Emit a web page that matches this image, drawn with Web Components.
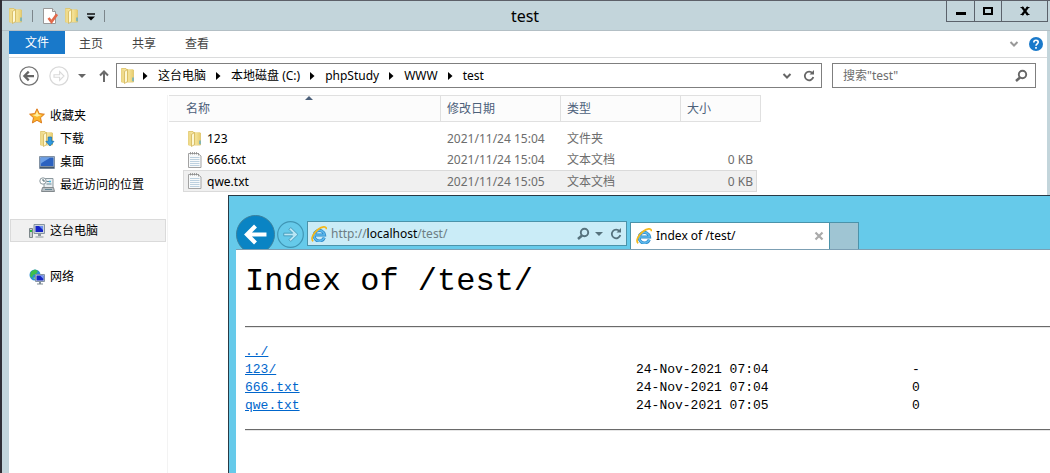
<!DOCTYPE html>
<html lang="zh-CN">
<head>
<meta charset="utf-8">
<title>test</title>
<style>
html,body{height:100%}
body{margin:0;overflow:hidden;position:relative;background:#fff;font:12px/20px "Noto Sans","Noto Sans CJK SC",sans-serif;color:#000}
</style>
</head>
<body>
<explorer-window>
  <title-bar slot="title">test</title-bar>
  <ribbon-tabs slot="ribbon"></ribbon-tabs>
  <nav-bar slot="nav"></nav-bar>
  <side-nav slot="side">
    <nav-item icon="star">收藏夹</nav-item>
    <nav-item icon="download" child>下载</nav-item>
    <nav-item icon="desktop" child>桌面</nav-item>
    <nav-item icon="recent" child>最近访问的位置</nav-item>
    <nav-item icon="computer" group selected>这台电脑</nav-item>
    <nav-item icon="network" group>网络</nav-item>
  </side-nav>
  <file-list></file-list>
</explorer-window>
<browser-window>
  <dir-listing></dir-listing>
</browser-window>

<script>
const folder = '<defs><linearGradient id="f" x2="1"><stop stop-color="#e3c760"/><stop offset=".35" stop-color="#f4e39a"/><stop offset="1" stop-color="#e9cf72"/></linearGradient></defs><path d="M1.500.5h4.500l1 1.500h6.500v12h-12z" fill="#f3e3a0" stroke="#dcc062" stroke-width=".8"/><path d="M6.500 1.500h6.500v12.500h-6.500z" fill="url(#f)"/><path d="M1.500 1l3 .8v13.500l-3-1.300z" fill="#efdb8c"/><path d="M4.500 3.500l3-2V13.500l-3 2z" fill="#fdf8d4" stroke="#cfae4a" stroke-width=".7"/><path d="M13 9.500v3.800" stroke="#45a6d8" stroke-width="1.200"/>';
const ie = '<path d="M13.300 11.600A5.300 5.300 0 1 1 13.600 9H4" fill="none" stroke="#2585c7" stroke-width="3"/><path d="M13.300 11.600A5.300 5.300 0 1 1 13.600 9H4" fill="none" stroke="#5cb8ec" stroke-width="1.700"/><path d="M2.200 15.200C-.8 13 2.500 7 7 3.500 11 .5 15.500-.2 15.400 3.200" fill="none" stroke="#f3b81c" stroke-width="1.700"/>';
const icons = {
  folder,
  star:'<path d="M8 .8l2.200 4.800 5.200.6-3.900 3.500 1.100 5.200L8 12.300l-4.600 2.600 1.100-5.200L.6 6.200l5.200-.6z" fill="#fbb62c" stroke="#dc7a1c"/><path d="M8 3l1.500 3.600 3 .4-4.500 1.800-4.500-1.800 3-.4z" fill="#fff0a2"/>',
  download: folder + '<path d="M9.200 6h3.400v4.300H15L11 15 6.800 10.300h2.400z" fill="#2f9ae0" stroke="#1a6dad" stroke-width=".7"/>',
  desktop:'<path d="M.5 2.500h15v12H.5z" fill="#b9c6d2" stroke="#8292a4"/><path d="M1.500 3.500h13v8.500h-13z" fill="#2b62c0"/><path d="M1.500 3.500h10L2.500 9l-1 2z" fill="#6c9fe5"/><path d="M1 12.500h14v1.700H1z" fill="#44586c"/>',
  recent:'<path d="M5 1.500h9v9H5z" fill="#e9eef1" stroke="#8d999e"/><path d="M3.500 10.500h11l1 4h-13z" fill="#b8bfc3" stroke="#82898d"/><path d="M7.500 4.500h4M7.500 7h5M6 12.500h7" stroke="#648796"/><path d="M10 4.500h2" stroke="#40b6df" stroke-width="1.500"/><circle cx="4" cy="4" r="3.200" fill="#fff" stroke="#8a979d"/><path d="M4 2v2h2" fill="none" stroke="#4d676f"/>',
  computer:'<path d="M.5 5.500h3v9h-3z" fill="#c8ced0" stroke="#7d878a"/><path d="M1 8h2" stroke="#26b83c" stroke-width="2"/><path d="M5 1.500h10.500v9H5z" fill="#cdd5dc" stroke="#8694a0"/><path d="M6.500 3H14v6H6.500z" fill="#1524c7"/><path d="M10 3h4v4z" fill="#6a8ef0"/><path d="M9 11h3v2H9zM6.500 13.500h8v1h-8z" fill="#8a969d"/>',
  network:'<circle cx="6" cy="6" r="5.500" fill="#2b8cd8"/><path d="M2 2.500l4-2 3 1.500-2 3-3 1-1 3-2-2z" fill="#3fbf4a"/><path d="M4 9l3-1v3z" fill="#7edc78"/><path d="M6.500 5.500h9v7h-9z" fill="#cbd5e0" stroke="#8695a5"/><path d="M7.500 6.500h7v5h-7z" fill="#1626c4"/><path d="M11 6.500h3.500V10z" fill="#7c9cf3"/><path d="M10 13h2v1.500h2v1H8v-1h2z" fill="#7f8c96"/>',
  text:'<path d="M1.500 1.500h9.500l3 2.500v11.500h-12.500z" fill="#f8fafb" stroke="#a3a3a3"/><path d="M3.500 0v2.500M5.500 0v2.500M7.500 0v2.500M9.500 0v2.500M11.500 1v2.500" stroke="#8b8b8b" stroke-width=".8"/><path d="M3 5.500h9.500M3 7.500h9.500M3 9.500h9.500M3 11.500h9.500M3 13.500h9.500" stroke="#bcd0df"/>',
  check:'<path d="M1.500.5h9l3 3v12h-12z" fill="#fff" stroke="#999"/><path d="M10.500.5v3h3" fill="#ddd" stroke="#999"/><path d="M6.500 10l3 3.800 5.500-7.500" fill="none" stroke="#e2694a" stroke-width="2.600"/>',
  quick:'<path d="M4 6h8" stroke="#000" stroke-width="1.400"/><path d="M4 8.500h8l-4 4z" fill="#000"/>',
  back:'<circle cx="8" cy="8" r="7.300" fill="none" stroke="#757575"/><path d="M12 8H4.500M7.800 4.500L4.300 8l3.500 3.500" fill="none" stroke="#666" stroke-width="1.800"/>',
  forward:'<circle cx="8" cy="8" r="7.300" fill="none" stroke="#d9d9d9"/><path d="M4 7h4.500V4.500L12 8l-3.500 3.500V9H4z" fill="none" stroke="#dadada" stroke-width=".9"/>',
  up:'<path d="M8 14V3.500M4 7.500l4-4 4 4" fill="none" stroke="#6b6b6b" stroke-width="2"/>',
  caret:'<path d="M4 6h8l-4 4z" fill="currentColor"/>',
  right:'<path d="M6 4l4.500 4L6 12z" fill="#000"/>',
  chevron:'<path d="M4.500 6L8 9.500 11.500 6" fill="none" stroke="currentColor" stroke-width="2"/>',
  refresh:'<path d="M11.500 5.300A4.300 4.300 0 1 0 12.300 9" fill="none" stroke="currentColor" stroke-width="1.800"/><path d="M8.500 6.500h4.500V2z" fill="currentColor"/>',
  search:'<circle cx="9.500" cy="6.500" r="3.700" fill="none" stroke="currentColor" stroke-width="1.900"/><path d="M7 9.500L3 13" stroke="currentColor" stroke-width="2.500"/>',
  help:'<circle cx="8" cy="8" r="8" fill="#1979ca"/><path d="M5.500 6.200C5.500 2.800 10.700 3 10.500 6 10.400 7.800 8 7.800 8 10M8 11.300v2" fill="none" stroke="#fff" stroke-width="1.900"/>',
  min:'<path d="M3 9h10v3H3z" fill="#000"/>',
  max:'<path d="M4 5h8v6H4z" fill="none" stroke="#000" stroke-width="2"/>',
  close:'<path d="M5 4l6 8M11 4l-6 8" stroke="#000" stroke-width="2.200"/><path d="M3.500 4.500h3M9.500 4.500h3M3.500 11.500h3M9.500 11.500h3" stroke="#000" stroke-width="1"/>',
  x:'<path d="M4.500 4.500l7 7M11.500 4.500l-7 7" stroke="#aaa" stroke-width="2.200"/>',
  bigback:'<circle cx="8" cy="8" r="7.800" fill="#0a84c4" stroke="#3c7f9b" stroke-width=".4"/><path d="M12.500 8H4.500M8 4.500L4.500 8 8 11.500" fill="none" stroke="#fff" stroke-width="1.700"/>',
  bigforward:'<circle cx="8" cy="8" r="7.600" fill="none" stroke="#4096b5" stroke-width=".7"/><path d="M4 7.200h5.300L7 4.900l1.200-1L12.400 8l-4.200 4.100L7 11.100l2.300-2.300H4z" fill="#b9e6f5" stroke="#4096b5" stroke-width=".5"/>',
  ie
};
const base = '*{box-sizing:border-box}button{font:inherit;color:inherit;border:0;padding:0;background:none;display:flex;align-items:center;justify-content:center}';
const define = (tag, css, html) => customElements.define(tag, class extends HTMLElement {
  constructor() {
    super();
    this.attachShadow({mode: 'open'}).innerHTML = `<style>${base}${css}</style>${typeof html === 'function' ? html(this) : html}`;
  }
});
const ic = (name, size = 16) => `<ui-icon name="${name}" style="--size:${size}px"></ui-icon>`;

define('ui-icon', ':host{display:block;flex:none;width:var(--size,16px);height:var(--size,16px)}svg{display:block;width:100%;height:100%}',
  el => `<svg viewBox="0 0 16 16" aria-hidden="true">${icons[el.getAttribute('name')]}</svg>`);

define('explorer-window', `
:host{display:flex;flex-direction:column;min-height:100%;background:#fff;border:solid #c3d5db;border-width:0 3px 0 7px;box-sizing:border-box;margin-left:2px;box-shadow:-2px 0 #302e35}
.body{flex:1;display:flex}`,
`<slot name="title"></slot><slot name="ribbon"></slot><slot name="nav"></slot><div class="body"><slot name="side"></slot><slot></slot></div>`);

define('title-bar', `
:host{display:grid;grid-template-columns:1fr auto 1fr;height:31px;margin:0 -3px 0 -7px;padding-right:2px;background:#c3d5db;border-top:1px solid #5d6069;border-bottom:1px solid #b3bfc5;box-sizing:border-box}
h1{margin:0;font-size:16px;font-weight:400;line-height:30px}
.quick{display:flex;align-items:center;padding-left:6px}
.sep{width:1px;height:12px;background:#7c868b;margin:0 9px 0 8px}
.sep.end{margin:0 0 0 5px}
.gap{margin-right:6px}
.more{margin-left:3px}
.win{display:flex;justify-self:end;height:21px;border:solid #5b626b;border-width:0 1px 1px}
.win button{width:27px}.win button+button{border-left:1px solid #5b626b}.win button:last-child{width:46px}`,
`<div class="quick">${ic('folder')}<i class="sep"></i><button class="gap" aria-label="属性">${ic('check')}</button><button aria-label="新建文件夹">${ic('folder')}</button><button class="more" aria-label="自定义快速访问工具栏">${ic('quick')}</button><i class="sep end"></i></div>
<h1><slot></slot></h1>
<div class="win"><button aria-label="最小化">${ic('min')}</button><button aria-label="最大化">${ic('max')}</button><button aria-label="关闭">${ic('close')}</button></div>`);

define('ribbon-tabs', `
:host{display:flex;height:27px;border-bottom:1px solid #dadbdc;box-sizing:border-box;padding-right:4px;color:#444}
button{padding:0 14px;height:26px;margin-right:1px}
.file{background:#1979ca;color:#fff;padding:0 16px;height:23px;margin:0}
.end{margin-left:auto;display:flex;align-items:center;gap:7px;color:#999}
.end button{padding:0;margin:0}`,
`<button class="file">文件</button><button>主页</button><button>共享</button><button>查看</button><div class="end"><button aria-label="展开功能区">${ic('chevron')}</button><button aria-label="帮助">${ic('help',14)}</button></div>`);

define('nav-bar', `
:host{display:flex;align-items:center;height:37px;padding:0 11px 2px 10px;box-sizing:border-box;color:#666}
.fwd{margin:0 5px 0 10px}.up{margin:0 4px 0 6px}
.path{flex:1;height:25px;border:1px solid #7f7f7f;display:flex;align-items:center;padding:0 4px 0 3px;color:#000}
.path button:not(.tool){margin:0 4px 0 5px}
.tool{margin-left:6px;color:#666}
.find{width:204px;height:25px;margin-left:10px;border:1px solid #7f7f7f;display:flex;align-items:center;padding:0 6px 0 10px}
input{flex:1;min-width:0;border:0;outline:0;padding:0;background:none;font:inherit}
input::placeholder{color:#6d6d6d;opacity:1}`,
`<button aria-label="后退">${ic('back',20)}</button><button class="fwd" aria-label="前进">${ic('forward',20)}</button><button aria-label="最近浏览的位置">${ic('caret')}</button><button class="up" aria-label="上移">${ic('up')}</button>
<div class="path">${ic('folder')}<span style="width:1px"></span>${['这台电脑','本地磁盘 (C:)','phpStudy','WWW','test'].map(t => `<span class="arrow">${ic('right')}</span><button>${t}</button>`).join('')}
<button class="tool" style="margin-left:auto" aria-label="以前的位置">${ic('chevron')}</button><button class="tool" aria-label="刷新">${ic('refresh')}</button></div>
<div class="find"><input type="search" aria-label="搜索" placeholder='搜索"test"'>${ic('search')}</div>`);

define('side-nav', ':host{display:block;flex:none;width:159px;padding:9px 1px 0 1px;border-right:1px solid #f3f3f3;box-sizing:border-box}', '<nav><slot></slot></nav>');
define('nav-item', `
:host{display:block}
:host([group]){margin-top:23px}
a{display:flex;align-items:center;height:23px;border:1px solid transparent;padding-left:18px;gap:5px;color:inherit;text-decoration:none}
:host([child]) a{padding-left:28px;gap:5px}
:host([selected]) a{background:#f0f0f0;border-color:#dadada}`,
el => `<a href="#">${ic(el.getAttribute('icon'))}<slot></slot></a>`);

const files = [['folder','123','2021/11/24 15:04','文件夹',''],['text','666.txt','2021/11/24 15:04','文本文档','0 KB'],['text','qwe.txt','2021/11/24 15:05','文本文档','0 KB']];
define('file-list', `
:host{display:block;margin-left:1px}
table,thead,tbody{display:block}
tr{display:grid;grid-template-columns:1fr 120px 120px 80px}
table{width:592px}
thead tr{height:27px;background:#fcfcfc;border:solid #e0e0e0;border-width:1px 0;color:#4c607a}
th{position:relative;font-weight:400;text-align:left;line-height:25px;padding:0 6px;border-right:1px solid #e0e0e0}
th:first-child{padding-left:17px}
th i{position:absolute;top:0;left:50%;border:solid transparent;border-width:0 4px 4px;border-bottom-color:#4c607a}
tbody{padding:6px 4px 0 14px}
tbody tr{height:21px;grid-template-columns:1fr 120px 120px 75px;border:1px solid transparent;align-items:center}
tbody tr:last-child{height:22px;background:#f0f0f0;border-color:#dadada}
td{padding:0 6px;color:#6d6d6d;line-height:19px}
td:first-child{display:flex;align-items:center;gap:4px;padding-left:3px;color:#000}
td:last-child{text-align:right;padding-right:3px}`,
`<table><thead><tr><th>名称<i></i></th><th>修改日期</th><th>类型</th><th>大小</th></tr></thead><tbody>${files.map(([i, ...c]) => `<tr>${c.map((t, n) => `<td>${n ? '' : ic(i)}${t}</td>`).join('')}</tr>`).join('')}</tbody></table>`);

define('browser-window', `
:host{position:absolute;left:228px;top:195px;right:0;bottom:0;display:flex;flex-direction:column;background:#66caea;border:solid #283a45;border-width:1px 0 0 1px;padding-left:7px;box-sizing:border-box;overflow:hidden}
.bar{flex:none;display:flex;align-items:flex-end;height:54px;overflow:hidden;border-bottom:1px solid #7c9fb3}
.back{height:34px;align-items:flex-start;margin-right:2px;overflow:hidden}
.fwd{margin:0 3px 1px 0}
.addr{flex:0 1 320px;height:25px;margin:0 3px 3px 0;border:1px solid #4b93aa;background:#caecf7;display:flex;align-items:center;gap:4px;padding:0 2px 0 3px;color:#56727d}
.url{flex:1;color:#6d7d83;outline:0;white-space:nowrap}
.more{margin:0 -3px 0 -4px}
b{font-weight:400;color:#000}
.tab{width:200px;height:27px;background:#fff;border:solid #4b93aa;border-width:1px 1px 0;display:flex;align-items:center;gap:4px;padding:0 2px 0 5px}
.tab span{flex:1;text-align:left}
.new{width:29px;height:27px;background:#9fc5d3;border:solid #4b93aa;border-width:1px 1px 0 0}
.page{flex:1;background:#fff}`,
`<div class="bar"><button class="back" aria-label="后退">${ic('bigback',39)}</button><button class="fwd" aria-label="前进">${ic('bigforward',27)}</button>
<div class="addr">${ic('ie')}<span class="url" contenteditable="true" role="textbox" aria-label="地址" spellcheck="false">http://<b>localhost</b>/test/</span><button aria-label="搜索">${ic('search')}</button><button class="more" aria-label="更多">${ic('caret')}</button><button aria-label="刷新">${ic('refresh')}</button></div>
<div class="tab">${ic('ie')}<span>Index of /test/</span><button aria-label="关闭选项卡">${ic('x')}</button></div><button class="new" aria-label="新建选项卡"></button></div>
<div class="page"><slot></slot></div>`);

define('dir-listing', `
:host{display:block;padding:12px 0 0 9px;font-family:"Liberation Mono",monospace;font-size:13px}
h1{margin:0;font-size:32px;font-weight:400;line-height:40px}
hr{margin:0;height:2px;border:0;border-top:1px solid #6a6a6a;background:#e6e6e6}
h1+hr{margin-top:24px}
table{border-collapse:collapse;table-layout:fixed;width:100%;margin:15px 0 14px}
col.n{width:391px}col.d{width:276px}
td{padding:0;height:18px;line-height:18px}
a{color:#06c}`,
`<h1>Index of /test/</h1><hr><table><colgroup><col class="n"><col class="d"><col></colgroup>
${[['../','',''],['123/','24-Nov-2021 07:04','-'],['666.txt','24-Nov-2021 07:04','0'],['qwe.txt','24-Nov-2021 07:05','0']].map(r => `<tr><td><a href="#">${r[0]}</a></td><td>${r[1]}</td><td>${r[2]}</td></tr>`).join('')}</table><hr>`);
</script>
</body>
</html>
